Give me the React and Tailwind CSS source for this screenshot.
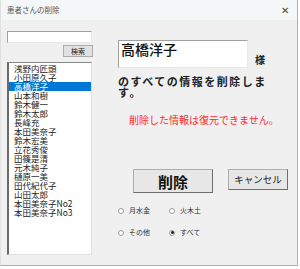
import React from "react";

const names = [
  "浅野内匠頭",
  "小田原久子",
  "高橋洋子",
  "山本和樹",
  "鈴木健一",
  "鈴木太郎",
  "長峰充",
  "本田美奈子",
  "鈴木宏美",
  "立花秀俊",
  "田篠是清",
  "元木純子",
  "樋原一美",
  "田代紀代子",
  "山田太郎",
  "本田美奈子No2",
  "本田美奈子No3",
];

const sans = { fontFamily: '"Noto Sans CJK JP", sans-serif' };

function Radio({ label, checked }) {
  return (
    <div className="flex items-center gap-[5px] w-[51px]">
      <span className="w-[6px] h-[6px] rounded-full border border-[#9a9a9a] bg-white flex items-center justify-center">
        {checked && <span className="w-[3px] h-[3px] rounded-full bg-[#222]" />}
      </span>
      <span className="text-[7px] leading-none text-[#333]">{label}</span>
    </div>
  );
}

export default function App() {
  return (
    <div className="w-[300px] h-[269px] bg-white relative overflow-hidden" style={sans}>
      <div className="w-[298px] h-[266px] bg-[#f0f0f0] border-r border-b border-[#b0b0b0] border-l border-l-[#e0e0e0] flex flex-col">
        <div className="h-[20px] bg-[#f4f7f7] flex items-center justify-between pl-[6px] pr-[8px] shrink-0">
          <span className="text-[7.5px] text-[#555] leading-none">患者さんの削除</span>
          <span className="text-[10px] text-[#444] leading-none">✕</span>
        </div>
        <div className="flex flex-1">
          <div className="w-[92px] pl-[6px] pt-[11px] flex flex-col">
            <div className="h-[12px] w-[85px] bg-white border border-[#a0a0a0] border-r-[#e8e8e8] border-b-[#e8e8e8]" />
            <div className="flex justify-end mt-[2px]">
              <div className="w-[30px] h-[12px] border border-[#adadad] bg-[#e1e1e1] flex items-center justify-center text-[7px] leading-none text-[#222]">
                検索
              </div>
            </div>
            <div className="mt-[5px] h-[193px] w-[85px] bg-white border border-[#888] border-l-[2px] border-l-[#6a6a6a] border-r-[#e0e0e0] border-b-[#e0e0e0] pt-[1px] overflow-hidden">
              {names.map((n, i) => (
                <div
                  key={n}
                  className={
                    "h-[9px] text-[8.5px] leading-[9px] pl-[5px] whitespace-nowrap " +
                    (i === 2 ? "bg-[#0078d7] text-white" : "text-[#222]")
                  }
                >
                  {n}
                </div>
              ))}
            </div>
          </div>
          <div className="flex-1 pl-[25px] pt-[20px] flex flex-col">
            <div className="flex items-end">
              <div className="w-[130px] h-[28px] bg-white border border-[#a0a0a0] border-r-[#e8e8e8] border-b-[#e8e8e8] pl-[2px] text-[14px] leading-[16px] text-[#111] font-medium">
                高橋洋子
              </div>
              <span className="ml-[7px] mb-[3px] text-[10px] font-bold leading-none text-[#222]">様</span>
            </div>
            <div className="mt-[8px] text-[11px] leading-[11px] font-bold tracking-[1.5px] text-[#222] w-[160px]">
              のすべての情報を削除します。
            </div>
            <div className="mt-[17px] pl-[11px] text-[10px] leading-none text-[#ff2a2a] whitespace-nowrap">
              削除した情報は復元できません。
            </div>
            <div className="mt-[44px] flex items-start">
              <div className="ml-[15px] w-[80px] h-[24px] border border-[#adadad] border-r-[#6e6e6e] border-b-[#6e6e6e] bg-[#e7e7e7] flex items-center justify-center text-[15px] font-bold leading-none text-[#111]">
                削除
              </div>
              <div className="ml-[15px] w-[60px] h-[21px] border border-[#adadad] border-r-[#6e6e6e] border-b-[#6e6e6e] bg-[#e7e7e7] flex items-center justify-center text-[9.5px] leading-none text-[#222]">
                キャンセル
              </div>
            </div>
            <div className="mt-[14px] flex">
              <Radio label="月水金" />
              <Radio label="火木土" />
            </div>
            <div className="mt-[15px] flex">
              <Radio label="その他" />
              <Radio label="すべて" checked />
            </div>
          </div>
        </div>
      </div>
    </div>
  );
}
